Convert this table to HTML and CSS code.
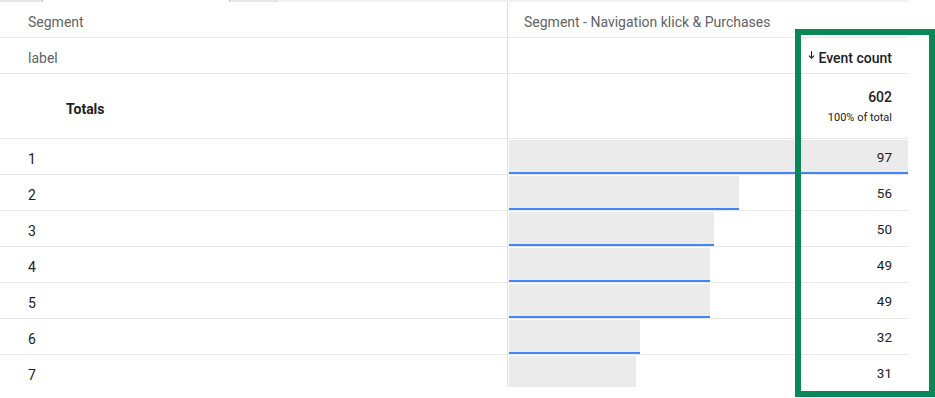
FILE: index.html
```html
<!DOCTYPE html>
<html lang="en">
<head>
<meta charset="utf-8">
<title>Segment table</title>
<link rel="stylesheet" href="styles.css">
</head>
<body>
<div class="page">
  <div class="tabs">
    <span class="tab tab-a"></span>
    <span class="tab tab-active"></span>
    <span class="tab tab-b"></span>
    <span class="tab tab-rest"></span>
  </div>
  <div class="table">
    <div class="row row-head">
      <div class="cell dim muted">Segment</div>
      <div class="cell metric head-seg muted">Segment - Navigation klick &amp; Purchases</div>
    </div>
    <div class="row row-head">
      <div class="cell dim muted">label</div>
      <div class="cell metric head-metric">
        <svg class="sort" viewBox="0 0 7 8" width="7" height="8"><path d="M3.5 0.3V7.2M0.9 4.6L3.5 7.2L6.1 4.6" fill="none" stroke="#202124" stroke-width="1.1"/></svg>
        <span>Event count</span>
      </div>
    </div>
    <div class="row row-totals">
      <div class="cell dim totals-label">Totals</div>
      <div class="cell metric totals-val">
        <span class="total-num">602</span>
        <span class="total-pct">100% of total</span>
      </div>
    </div>
    <div class="row">
      <div class="cell dim">1</div>
      <div class="cell metric data"><div class="bar" style="width:399px"></div><span class="val">97</span></div>
    </div>
    <div class="row">
      <div class="cell dim">2</div>
      <div class="cell metric data"><div class="bar" style="width:230px"></div><span class="val">56</span></div>
    </div>
    <div class="row">
      <div class="cell dim">3</div>
      <div class="cell metric data"><div class="bar" style="width:205px"></div><span class="val">50</span></div>
    </div>
    <div class="row">
      <div class="cell dim">4</div>
      <div class="cell metric data"><div class="bar" style="width:201px"></div><span class="val">49</span></div>
    </div>
    <div class="row">
      <div class="cell dim">5</div>
      <div class="cell metric data"><div class="bar" style="width:201px"></div><span class="val">49</span></div>
    </div>
    <div class="row">
      <div class="cell dim">6</div>
      <div class="cell metric data"><div class="bar" style="width:131px"></div><span class="val">32</span></div>
    </div>
    <div class="row">
      <div class="cell dim">7</div>
      <div class="cell metric data"><div class="bar" style="width:127px"></div><span class="val">31</span></div>
    </div>
  </div>
  <div class="highlight"></div>
</div>
</body>
</html>
```

FILE: styles.css
```css
* { box-sizing: border-box; }

html, body {
  margin: 0;
  padding: 0;
  background: #ffffff;
}

body {
  font-family: Roboto, "Liberation Sans", Arial, sans-serif;
  color: #202124;
  font-size: 14px;
}

.page {
  position: relative;
  width: 935px;
  height: 398px;
  overflow: hidden;
}

.tabs {
  display: flex;
  height: 2px;
  width: 908px;
}

.tab { height: 2px; }
.tab-a { width: 43px; background: #e6e6e6; border-right: 1px solid #bdbdbd; }
.tab-active { width: 186px; background: #ffffff; }
.tab-b { width: 48px; background: #e9e9e9; border-left: 1px solid #c4c4c4; border-right: 1px solid #d6d6d6; }
.tab-rest { flex: 1; background: #f1f1f1; }

.table {
  width: 908px;
  height: 385px;
  overflow: hidden;
}

.row {
  display: grid;
  grid-template-columns: 508px 400px;
  height: 36px;
}

.cell {
  border-bottom: 1px solid #e8e8e8;
  display: flex;
  align-items: center;
  padding-top: 5px;
}

.dim {
  border-right: 1px solid #e0e0e0;
  padding-left: 28px;
  font-size: 14px;
  color: #202124;
}

.muted { color: #5f6368; }

.metric { padding-left: 1px; }

.head-seg {
  padding-left: 16px;
}

.head-metric {
  justify-content: flex-end;
  padding-right: 16px;
  font-weight: 500;
  color: #202124;
  gap: 3px;
}

.head-metric .sort {
  align-self: center;
  margin-top: -6px;
}

.row-totals { height: 65px; }

.totals-label {
  padding-left: 66px;
  padding-top: 6px;
  font-weight: 700;
}

.totals-val {
  flex-direction: column;
  align-items: flex-end;
  justify-content: center;
  padding-right: 16px;
  padding-top: 1px;
  gap: 6px;
}

.total-num {
  font-size: 14px;
  font-weight: 500;
  line-height: 16px;
}

.total-pct {
  font-size: 11px;
  line-height: 13px;
}

.data {
  display: grid;
  align-items: stretch;
  padding-top: 0;
}

.bar {
  grid-area: 1 / 1;
  height: 34px;
  margin-top: 1px;
  background: #ebebeb;
  border-bottom: 2px solid #4285f4;
  align-self: start;
}

.val {
  grid-area: 1 / 1;
  justify-self: end;
  align-self: center;
  padding-right: 16px;
  font-size: 13.5px;
  margin-top: 1px;
}

.highlight {
  position: absolute;
  left: 795px;
  top: 29px;
  width: 140px;
  height: 368px;
  border: 6px solid #0a8756;
}
```
